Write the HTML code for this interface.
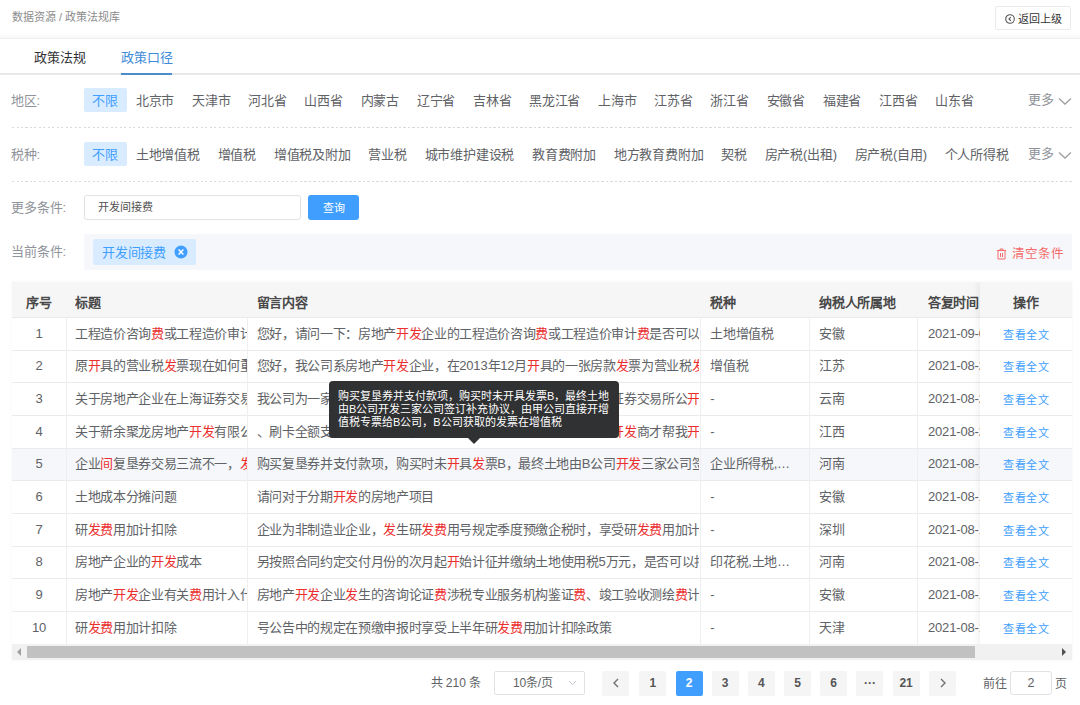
<!DOCTYPE html>
<html lang="zh-CN"><head><meta charset="utf-8">
<style>
*{box-sizing:border-box;margin:0;padding:0}
html,body{width:1080px;height:705px;overflow:hidden;background:#fff;font-family:"Liberation Sans",sans-serif;color:#606266}
.a{position:absolute;white-space:nowrap}
.hdr{left:0;top:0;width:1080px;height:39px;border-bottom:1px solid #ededed}
.bc{left:12px;top:7px;line-height:20px;font-size:11px;color:#8c8c8c}
.back{left:995px;top:6px;width:76px;height:24px;border:1px solid #ebebeb;border-radius:2px;font-size:11px;color:#333;line-height:24px;padding-left:22px}
.back svg{position:absolute;left:8.5px;top:7px}
.tabs{left:0;top:39px;width:1080px;height:36px;border-bottom:2px solid #e8e8e8}
.tab{top:48px;line-height:20px;font-size:13px;color:#303133}
.tab.on{color:#3d8ad8}
.tabbar{left:121px;top:73px;width:51px;height:2px;background:#4d8ccb}
.lbl{left:10.5px;font-size:13px;color:#909399;line-height:20px}
.row{left:83.5px;height:24px;display:flex;font-size:13px;letter-spacing:-0.2px;line-height:25.5px;color:#606266;width:930px;overflow:hidden}
.row span{padding:0 8.9px;flex:none}
.row span.on{background:#d9ecff;color:#409eff;border-radius:2px}
.more{left:1028px;font-size:13px;color:#909399;line-height:20px}
.more svg{position:absolute;left:29.5px;top:6.5px}
.dot{left:12px;width:1060px;height:1px;background:repeating-linear-gradient(90deg,#d9d9d9 0 2px,transparent 2px 4.5px)}
.inp{left:84px;top:195px;width:217px;height:25px;border:1px solid #e2e2e2;border-radius:3px;font-size:11px;letter-spacing:0.05px;line-height:22.4px;padding-left:13px;color:#505050}
.btn{left:308px;top:195px;width:51px;height:25px;background:#409eff;border-radius:3px;color:#fff;font-size:11px;line-height:26px;text-align:center}
.cond{left:84px;top:234px;width:988px;height:36px;background:#f5f7fa}
.tag{left:93px;top:239px;width:103px;height:26px;background:#d9ecff;border-radius:2px;color:#409eff;font-size:13px;letter-spacing:-0.25px;line-height:27px;padding-left:9px}
.tag svg{position:absolute;left:81px;top:6px}
.clr{left:996px;top:243.5px;line-height:20px;font-size:12.5px;color:#f56c6c;padding-left:16px}
.clr svg{position:absolute;left:0;top:4px}
/* table */
.tbl{left:12px;top:282px;width:1060px;height:378px;overflow:hidden;box-shadow:0 0 2px rgba(0,0,0,0.06)}
.th{position:absolute;left:0;top:0;width:1060px;height:36px;background:#f6f6f6;border-bottom:1px solid #ebebeb}
.c{position:absolute;white-space:nowrap;overflow:hidden;font-size:13px;line-height:20px;letter-spacing:-0.333px}
.l{letter-spacing:-0.15px}
.thc{font-weight:bold;color:#484848;top:11.3px}
.tr{position:absolute;left:0;width:1060px;height:32.6px;border-bottom:1px solid #ebebeb}
.r{color:#eb2f2f}
.vl{position:absolute;top:36px;width:1px;background:#efefef}
.fix{position:absolute;left:968px;top:0;width:92px;height:362.7px;background:#fff;box-shadow:-3px 0 5px rgba(0,0,0,0.05)}
.lk{color:#409eff;font-size:11px;letter-spacing:0.5px}
.sb{position:absolute;left:0;top:362px;width:1060px;height:16px;background:#f1f1f1}
.thumb{position:absolute;left:15px;top:2px;width:948px;height:12px;background:#c1c1c1}
/* tooltip */
.tip{left:329px;top:380.8px;width:290px;height:56.8px;background:#303133;border-radius:4px;color:#fff;font-size:11px;line-height:13px;padding:9.2px 0 0 9px;white-space:normal}
.tip:after{content:"";position:absolute;left:139.2px;top:56.8px;border:6px solid transparent;border-top-color:#303133;border-bottom:0}
/* pager */
.pg{top:671px;height:24px;line-height:24px;font-size:12.5px}
.pb{width:27px;height:24.6px;background:#f5f5f5;color:#555;text-align:center;border-radius:2px;font-weight:bold;font-size:12px}
.pb.on{background:#409eff;color:#fff}
</style></head><body>
<div class="a hdr"></div><div class="a" style="left:0;top:31px;width:1080px;height:7px;background:linear-gradient(#fff,#f9f9f9)"></div>
<div class="a bc">数据资源 / 政策法规库</div>
<div class="a back"><svg width="10" height="10" viewBox="0 0 10 10"><circle cx="5" cy="5" r="4.3" fill="none" stroke="#555" stroke-width="1.1"/><path d="M5.8 3.2 L4 5 L5.8 6.8" fill="none" stroke="#555" stroke-width="1.1"/></svg>返回上级</div>
<div class="a tabs"></div>
<div class="a tab" style="left:34px">政策法规</div>
<div class="a tab on" style="left:121px">政策口径</div>
<div class="a tabbar"></div>

<div class="a lbl" style="top:90.5px">地区:</div>
<div class="a row" style="top:88px"><span class="on">不限</span><span>北京市</span><span>天津市</span><span>河北省</span><span>山西省</span><span>内蒙古</span><span>辽宁省</span><span>吉林省</span><span>黑龙江省</span><span>上海市</span><span>江苏省</span><span>浙江省</span><span>安徽省</span><span>福建省</span><span>江西省</span><span>山东省</span></div>
<div class="a more" style="top:90px">更多<svg width="14" height="10" viewBox="0 0 14 10"><path d="M1 1.5 L7 7 L13 1.5" fill="none" stroke="#a0a0a0" stroke-width="1.3"/></svg></div>
<div class="a dot" style="top:127px"></div>

<div class="a lbl" style="top:144.5px">税种:</div>
<div class="a row" style="top:142px"><span class="on">不限</span><span>土地增值税</span><span>增值税</span><span>增值税及附加</span><span>营业税</span><span>城市维护建设税</span><span>教育费附加</span><span>地方教育费附加</span><span>契税</span><span>房产税(出租)</span><span>房产税(自用)</span><span>个人所得税</span></div>
<div class="a more" style="top:144px">更多<svg width="14" height="10" viewBox="0 0 14 10"><path d="M1 1.5 L7 7 L13 1.5" fill="none" stroke="#a0a0a0" stroke-width="1.3"/></svg></div>
<div class="a dot" style="top:181px"></div>

<div class="a lbl" style="top:197.8px">更多条件:</div>
<div class="a inp">开发间接费</div>
<div class="a btn">查询</div>

<div class="a cond"></div>
<div class="a lbl" style="top:241.8px">当前条件:</div>
<div class="a tag">开发间接费<svg width="14" height="14" viewBox="0 0 14 14"><circle cx="7" cy="7" r="6.5" fill="#409eff"/><path d="M4.6 4.6 L9.4 9.4 M9.4 4.6 L4.6 9.4" stroke="#fff" stroke-width="1.4"/></svg></div>
<div class="a clr"><svg width="11" height="12" viewBox="0 0 11 12"><path d="M1 2.5 H10 M4 2.5 V1 H7 V2.5 M2 2.5 V11 H9 V2.5 M4.5 5 V9 M6.5 5 V9" fill="none" stroke="#f56c6c" stroke-width="1"/></svg>清空条件</div>

<div class="a tbl">
 <div class="th"></div>
 <div class="c thc" style="left:0px;width:54px;text-align:center">序号</div>
 <div class="c thc" style="left:63px;width:172.0px">标题</div>
 <div class="c thc" style="left:244.5px;width:442.7px">留言内容</div>
 <div class="c thc" style="left:698.3px;width:98.7px">税种</div>
 <div class="c thc" style="left:807.4px;width:98.6px">纳税人所属地</div>
 <div class="c thc" style="left:915.9px;width:52.1px">答复时间</div>
 <div class="tr" style="top:36.00px"></div>
 <div class="c" style="left:0px;top:41.80px;width:54px;text-align:center">1</div>
 <div class="c" style="left:63px;top:41.80px;width:172.0px">工程造价咨询<span class="r">费</span>或工程造价审计<span class="r">费</span></div>
 <div class="c" style="left:244.5px;top:41.80px;width:442.7px">您好，请问一下：房地产<span class="r">开发</span>企业的工程造价咨询<span class="r">费</span>或工程造价审计<span class="r">费</span>是否可以</div>
 <div class="c" style="left:698.3px;top:41.80px;width:98.7px">土地增值税</div>
 <div class="c" style="left:807.4px;top:41.80px;width:98.6px">安徽</div>
 <div class="c" style="left:915.9px;top:41.80px;width:52.1px"><span class="l">2021-09-01</span></div>
 <div class="tr" style="top:68.67px"></div>
 <div class="c" style="left:0px;top:74.47px;width:54px;text-align:center">2</div>
 <div class="c" style="left:63px;top:74.47px;width:172.0px">原<span class="r">开</span>具的营业税<span class="r">发</span>票现在如何重<span class="r">开</span></div>
 <div class="c" style="left:244.5px;top:74.47px;width:442.7px">您好，我公司系房地产<span class="r">开发</span>企业，在<span class="l">2013</span>年<span class="l">12</span>月<span class="r">开</span>具的一张房款<span class="r">发</span>票为营业税<span class="r">发</span>票</div>
 <div class="c" style="left:698.3px;top:74.47px;width:98.7px">增值税</div>
 <div class="c" style="left:807.4px;top:74.47px;width:98.6px">江苏</div>
 <div class="c" style="left:915.9px;top:74.47px;width:52.1px"><span class="l">2021-08-25</span></div>
 <div class="tr" style="top:101.34px"></div>
 <div class="c" style="left:0px;top:107.14px;width:54px;text-align:center">3</div>
 <div class="c" style="left:63px;top:107.14px;width:172.0px">关于房地产企业在上海证券交易所</div>
 <div class="c" style="left:244.5px;top:107.14px;width:442.7px">我公司为一家在上海证券交易所上市的房地产公司，在本期上海证券交易所公<span class="r">开</span></div>
 <div class="c" style="left:698.3px;top:107.14px;width:98.7px"><span class="l">-</span></div>
 <div class="c" style="left:807.4px;top:107.14px;width:98.6px">云南</div>
 <div class="c" style="left:915.9px;top:107.14px;width:52.1px"><span class="l">2021-08-23</span></div>
 <div class="tr" style="top:134.01px"></div>
 <div class="c" style="left:0px;top:139.81px;width:54px;text-align:center">4</div>
 <div class="c" style="left:63px;top:139.81px;width:172.0px">关于新余聚龙房地产<span class="r">开发</span>有限公司</div>
 <div class="c" style="left:244.5px;top:139.81px;width:442.7px">、刷卡全额支付购房款之后，我们一直等到了现在的今年五月份<span class="r">开发</span>商才帮我<span class="r">开</span></div>
 <div class="c" style="left:698.3px;top:139.81px;width:98.7px"><span class="l">-</span></div>
 <div class="c" style="left:807.4px;top:139.81px;width:98.6px">江西</div>
 <div class="c" style="left:915.9px;top:139.81px;width:52.1px"><span class="l">2021-08-20</span></div>
 <div class="tr" style="top:166.68px;background:#f5f7fa"></div>
 <div class="c" style="left:0px;top:172.48px;width:54px;text-align:center">5</div>
 <div class="c" style="left:63px;top:172.48px;width:172.0px">企业<span class="r">间</span>复垦券交易三流不一，<span class="r">发</span>票</div>
 <div class="c" style="left:244.5px;top:172.48px;width:442.7px">购买复垦券并支付款项，购买时未<span class="r">开</span>具<span class="r">发</span>票<span class="l">B</span>，最终土地由<span class="l">B</span>公司<span class="r">开发</span>三家公司签订</div>
 <div class="c" style="left:698.3px;top:172.48px;width:98.7px">企业所得税,…</div>
 <div class="c" style="left:807.4px;top:172.48px;width:98.6px">河南</div>
 <div class="c" style="left:915.9px;top:172.48px;width:52.1px"><span class="l">2021-08-19</span></div>
 <div class="tr" style="top:199.35px"></div>
 <div class="c" style="left:0px;top:205.15px;width:54px;text-align:center">6</div>
 <div class="c" style="left:63px;top:205.15px;width:172.0px">土地成本分摊问题</div>
 <div class="c" style="left:244.5px;top:205.15px;width:442.7px">请问对于分期<span class="r">开发</span>的房地产项目</div>
 <div class="c" style="left:698.3px;top:205.15px;width:98.7px"><span class="l">-</span></div>
 <div class="c" style="left:807.4px;top:205.15px;width:98.6px">安徽</div>
 <div class="c" style="left:915.9px;top:205.15px;width:52.1px"><span class="l">2021-08-18</span></div>
 <div class="tr" style="top:232.02px"></div>
 <div class="c" style="left:0px;top:237.82px;width:54px;text-align:center">7</div>
 <div class="c" style="left:63px;top:237.82px;width:172.0px">研<span class="r">发费</span>用加计扣除</div>
 <div class="c" style="left:244.5px;top:237.82px;width:442.7px">企业为非制造业企业，<span class="r">发</span>生研<span class="r">发费</span>用号规定季度预缴企税时，享受研<span class="r">发费</span>用加计</div>
 <div class="c" style="left:698.3px;top:237.82px;width:98.7px"><span class="l">-</span></div>
 <div class="c" style="left:807.4px;top:237.82px;width:98.6px">深圳</div>
 <div class="c" style="left:915.9px;top:237.82px;width:52.1px"><span class="l">2021-08-17</span></div>
 <div class="tr" style="top:264.69px"></div>
 <div class="c" style="left:0px;top:270.49px;width:54px;text-align:center">8</div>
 <div class="c" style="left:63px;top:270.49px;width:172.0px">房地产企业的<span class="r">开发</span>成本</div>
 <div class="c" style="left:244.5px;top:270.49px;width:442.7px">另按照合同约定交付月份的次月起<span class="r">开</span>始计征并缴纳土地使用税<span class="l">5</span>万元，是否可以扣除</div>
 <div class="c" style="left:698.3px;top:270.49px;width:98.7px">印花税,土地…</div>
 <div class="c" style="left:807.4px;top:270.49px;width:98.6px">河南</div>
 <div class="c" style="left:915.9px;top:270.49px;width:52.1px"><span class="l">2021-08-16</span></div>
 <div class="tr" style="top:297.36px"></div>
 <div class="c" style="left:0px;top:303.16px;width:54px;text-align:center">9</div>
 <div class="c" style="left:63px;top:303.16px;width:172.0px">房地产<span class="r">开发</span>企业有关<span class="r">费</span>用计入什么</div>
 <div class="c" style="left:244.5px;top:303.16px;width:442.7px">房地产<span class="r">开发</span>企业<span class="r">发</span>生的咨询论证<span class="r">费</span>涉税专业服务机构鉴证<span class="r">费</span>、竣工验收测绘<span class="r">费</span>计</div>
 <div class="c" style="left:698.3px;top:303.16px;width:98.7px"><span class="l">-</span></div>
 <div class="c" style="left:807.4px;top:303.16px;width:98.6px">安徽</div>
 <div class="c" style="left:915.9px;top:303.16px;width:52.1px"><span class="l">2021-08-13</span></div>
 <div class="tr" style="top:330.03px"></div>
 <div class="c" style="left:0px;top:335.83px;width:54px;text-align:center">10</div>
 <div class="c" style="left:63px;top:335.83px;width:172.0px">研<span class="r">发费</span>用加计扣除</div>
 <div class="c" style="left:244.5px;top:335.83px;width:442.7px">号公告中的规定在预缴申报时享受上半年研<span class="r">发费</span>用加计扣除政策</div>
 <div class="c" style="left:698.3px;top:335.83px;width:98.7px"><span class="l">-</span></div>
 <div class="c" style="left:807.4px;top:335.83px;width:98.6px">天津</div>
 <div class="c" style="left:915.9px;top:335.83px;width:52.1px"><span class="l">2021-08-12</span></div>
 <div class="vl" style="left:53.5px;height:362.7px"></div>
 <div class="vl" style="left:235.2px;height:362.7px"></div>
 <div class="vl" style="left:688.2px;height:362.7px"></div>
 <div class="vl" style="left:797.2px;height:362.7px"></div>
 <div class="vl" style="left:905.1px;height:362.7px"></div>
 <div class="fix">
 <div class="th" style="width:92px;left:0"></div>
 <div class="c thc" style="left:0;width:92px;text-align:center">操作</div>
 <div class="tr" style="top:36.00px;width:92px"></div>
 <div class="c lk" style="left:0;width:92px;text-align:center;top:42.60px">查看全文</div>
 <div class="tr" style="top:68.67px;width:92px"></div>
 <div class="c lk" style="left:0;width:92px;text-align:center;top:75.27px">查看全文</div>
 <div class="tr" style="top:101.34px;width:92px"></div>
 <div class="c lk" style="left:0;width:92px;text-align:center;top:107.94px">查看全文</div>
 <div class="tr" style="top:134.01px;width:92px"></div>
 <div class="c lk" style="left:0;width:92px;text-align:center;top:140.61px">查看全文</div>
 <div class="tr" style="top:166.68px;width:92px;background:#f5f7fa"></div>
 <div class="c lk" style="left:0;width:92px;text-align:center;top:173.28px">查看全文</div>
 <div class="tr" style="top:199.35px;width:92px"></div>
 <div class="c lk" style="left:0;width:92px;text-align:center;top:205.95px">查看全文</div>
 <div class="tr" style="top:232.02px;width:92px"></div>
 <div class="c lk" style="left:0;width:92px;text-align:center;top:238.62px">查看全文</div>
 <div class="tr" style="top:264.69px;width:92px"></div>
 <div class="c lk" style="left:0;width:92px;text-align:center;top:271.29px">查看全文</div>
 <div class="tr" style="top:297.36px;width:92px"></div>
 <div class="c lk" style="left:0;width:92px;text-align:center;top:303.96px">查看全文</div>
 <div class="tr" style="top:330.03px;width:92px"></div>
 <div class="c lk" style="left:0;width:92px;text-align:center;top:336.63px">查看全文</div>
 </div>
 <div class="sb"><div class="thumb"></div><svg style="position:absolute;left:5px;top:4px" width="5" height="8"><path d="M4 0 L0 4 L4 8Z" fill="#a0a0a0"/></svg><svg style="position:absolute;left:1050px;top:4px" width="5" height="8"><path d="M0 0 L4 4 L0 8Z" fill="#505050"/></svg></div>
</div>

<div class="a tip">购买复垦券并支付款项，购买时未开具发票B，最终土地由B公司开发三家公司签订补充协议，由甲公司直接开增值税专票给B公司，B公司获取的发票在增值税</div>

<div class="a pg" style="left:430.5px;color:#606266;font-size:12px">共 210 条</div>
<div class="a pg" style="left:494px;width:91px;border:1px solid #e2e2e2;border-radius:2px;line-height:22px;padding-left:18px;color:#606266;font-size:12px;letter-spacing:-0.2px">10条/页<svg style="position:absolute;left:73px;top:8px" width="9" height="6" viewBox="0 0 9 6"><path d="M1 1 L4.5 4.5 L8 1" fill="none" stroke="#c0c4cc" stroke-width="1"/></svg></div>
<div class="a pg pb" style="left:602px"><svg width="8" height="10" viewBox="0 0 8 10" style="vertical-align:-1px"><path d="M6 1 L2 5 L6 9" fill="none" stroke="#707070" stroke-width="1.4"/></svg></div>
<div class="a pg pb" style="left:639.4px">1</div>
<div class="a pg pb on" style="left:675.6px">2</div>
<div class="a pg pb" style="left:711.7px">3</div>
<div class="a pg pb" style="left:747.8px">4</div>
<div class="a pg pb" style="left:784px">5</div>
<div class="a pg pb" style="left:820.2px">6</div>
<div class="a pg pb" style="left:856.4px">···</div>
<div class="a pg pb" style="left:892.6px">21</div>
<div class="a pg pb" style="left:929px"><svg width="8" height="10" viewBox="0 0 8 10" style="vertical-align:-1px"><path d="M2 1 L6 5 L2 9" fill="none" stroke="#707070" stroke-width="1.4"/></svg></div>
<div class="a pg" style="left:983px;top:671.8px;font-size:12px;color:#606266">前往</div>
<div class="a pg" style="left:1010px;width:42px;border:1px solid #e2e2e2;border-radius:3px;line-height:22px;text-align:center;color:#606266">2</div>
<div class="a pg" style="left:1055px;top:671.8px;font-size:12px;color:#606266">页</div>
</body></html>
